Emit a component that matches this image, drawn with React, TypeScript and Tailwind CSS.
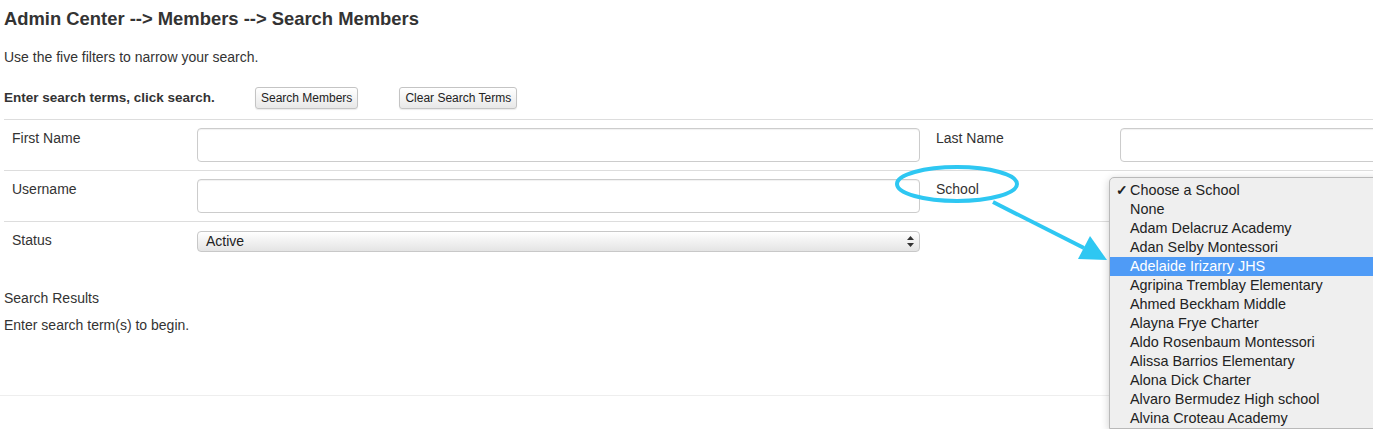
import React from "react";

const schools = [
  "Choose a School",
  "None",
  "Adam Delacruz Academy",
  "Adan Selby Montessori",
  "Adelaide Irizarry JHS",
  "Agripina Tremblay Elementary",
  "Ahmed Beckham Middle",
  "Alayna Frye Charter",
  "Aldo Rosenbaum Montessori",
  "Alissa Barrios Elementary",
  "Alona Dick Charter",
  "Alvaro Bermudez High school",
  "Alvina Croteau Academy",
];

function TextInput() {
  return (
    <div className="h-[34px] w-full rounded-[4px] border border-[#cccccc] bg-white shadow-[inset_0_1px_1px_rgba(0,0,0,0.06)]" />
  );
}

function Btn({ children }: { children: React.ReactNode }) {
  return (
    <button className="h-[22px] rounded-[3px] border border-[#c4c4c4] bg-gradient-to-b from-white to-[#e8e8e8] px-[5px] text-[12px] leading-[20px] text-[#222] shadow-[0_1px_1px_rgba(0,0,0,0.08)]">
      {children}
    </button>
  );
}

export default function App() {
  return (
    <div
      className="relative h-[429px] w-[1373px] overflow-hidden bg-white text-[14px] text-[#333]"
      style={{ fontFamily: '"Liberation Sans", Arial, sans-serif' }}
    >
      <div className="pl-1 pt-2">
        <h3 className="text-[18.4px] font-bold leading-[21px] text-[#333]">
          Admin Center --&gt; Members --&gt; Search Members
        </h3>
        <p className="mt-[18px] leading-[20px]">Use the five filters to narrow your search.</p>

        <div className="mt-[20px] flex h-[22px] items-center">
          <span className="w-[251px] text-[13.5px] font-bold">Enter search terms, click search.</span>
          <Btn>Search Members</Btn>
          <span className="w-[41px]" />
          <Btn>Clear Search Terms</Btn>
        </div>

        <div className="mt-[10px] grid w-[1847px] grid-cols-[185px_739px_184px_739px]">
          <div className="border-t border-[#dddddd] p-2 leading-[21px]">First Name</div>
          <div className="border-t border-[#dddddd] p-2">
            <TextInput />
          </div>
          <div className="border-t border-[#dddddd] p-2 leading-[21px]">Last Name</div>
          <div className="border-t border-[#dddddd] p-2">
            <TextInput />
          </div>

          <div className="border-t border-[#dddddd] p-2 leading-[21px]">Username</div>
          <div className="border-t border-[#dddddd] p-2">
            <TextInput />
          </div>
          <div className="border-t border-[#dddddd] p-2 leading-[21px]">School</div>
          <div className="border-t border-[#dddddd] p-2" />

          <div className="border-t border-[#dddddd] p-2 leading-[21px]">Status</div>
          <div className="border-t border-[#dddddd] p-2">
            <div className="mt-px flex h-[21px] items-center justify-between rounded-[4px] border border-[#c8c8c8] bg-gradient-to-b from-white to-[#e4e4e4] pl-2 pr-[5px] text-[14px] text-[#222]">
              <span>Active</span>
              <svg width="7" height="11" viewBox="0 0 7 11">
                <path d="M3.5 0 L7 4 H0 Z" fill="#333" />
                <path d="M3.5 11 L7 7 H0 Z" fill="#333" />
              </svg>
            </div>
          </div>
          <div className="border-t border-[#dddddd] p-2" />
          <div className="border-t border-[#dddddd] p-2" />
        </div>

        <div className="mt-[28px] leading-[20px]">Search Results</div>
        <p className="mt-[7px] leading-[20px]">Enter search term(s) to begin.</p>
      </div>

      <div className="mt-[60px] border-t border-[#eeeeee]" />

      {/* open school dropdown */}
      <div className="absolute left-[1109px] top-[177px] w-[320px] rounded-tl-[5px] border border-[#b9b9b9] bg-[#efefef] pt-[3px] text-[14.4px] leading-[19px] text-[#222] shadow-[0_2px_8px_rgba(0,0,0,0.2)]">
        {schools.map((s, i) => (
          <div
            key={s}
            className={`relative h-[19px] pl-[20px] ${i === 4 ? "bg-[#4f9bf6] text-white" : ""}`}
          >
            {i === 0 && <span className="absolute left-[6px] text-[14px] font-bold">✓</span>}
            {s}
          </div>
        ))}
      </div>

      {/* annotation */}
      <svg className="pointer-events-none absolute left-0 top-0" width="1373" height="429">
        <ellipse cx="957" cy="184" rx="60" ry="17" fill="none" stroke="#2ec7f2" strokeWidth="4" />
        <line x1="993" y1="202" x2="1084" y2="248" stroke="#2ec7f2" strokeWidth="4" />
        <polygon points="1078,259 1090,236 1107,260" fill="#2ec7f2" />
      </svg>
    </div>
  );
}
